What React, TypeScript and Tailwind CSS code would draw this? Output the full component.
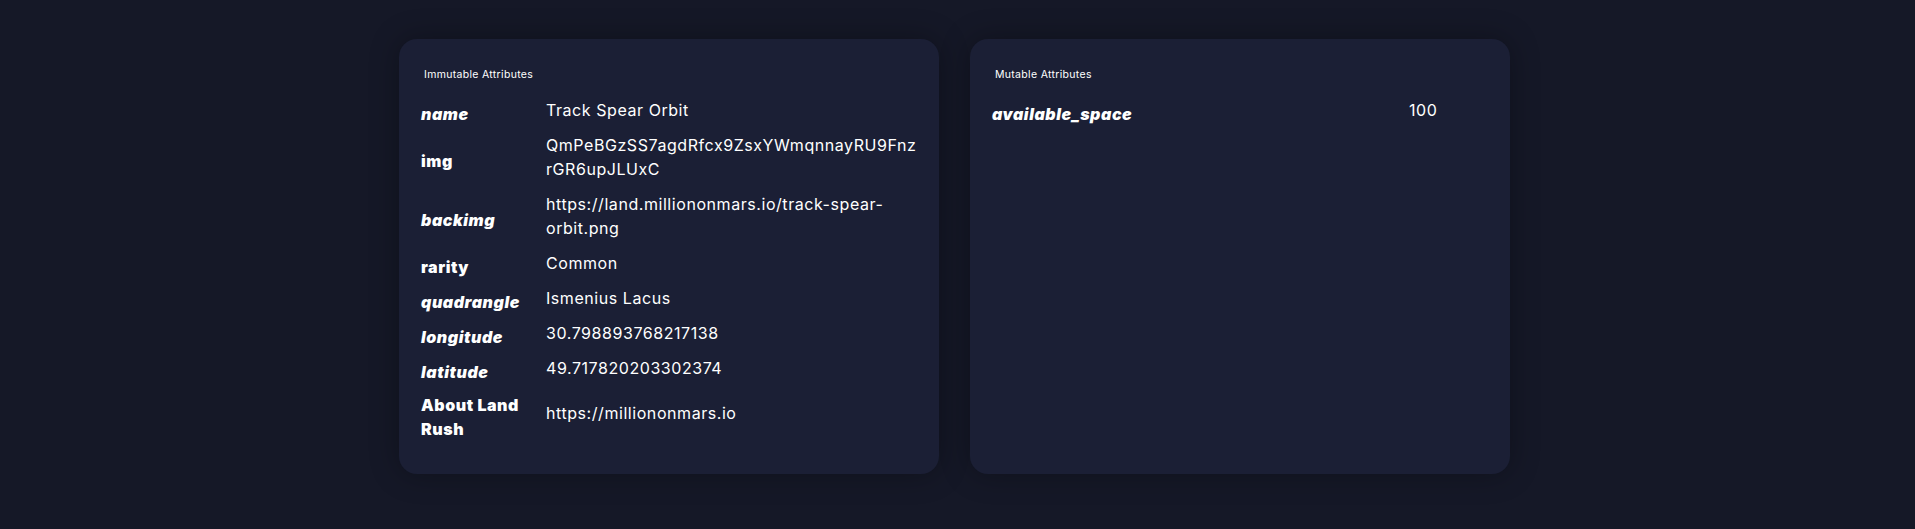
import React from "react";

type Row = { label: string; italic: boolean; value: React.ReactNode };

const immutable: Row[] = [
  { label: "name", italic: true, value: "Track Spear Orbit" },
  {
    label: "img",
    italic: false,
    value: (
      <>
        <span className="block">QmPeBGzSS7agdRfcx9ZsxYWmqnnayRU9Fnz</span>
        <span className="block">rGR6upJLUxC</span>
      </>
    ),
  },
  {
    label: "backimg",
    italic: true,
    value: (
      <>
        <span className="block">https://land.milliononmars.io/track-spear-</span>
        <span className="block">orbit.png</span>
      </>
    ),
  },
  { label: "rarity", italic: false, value: "Common" },
  { label: "quadrangle", italic: true, value: "Ismenius Lacus" },
  { label: "longitude", italic: true, value: "30.798893768217138" },
  { label: "latitude", italic: true, value: "49.717820203302374" },
  { label: "About Land Rush", italic: false, value: "https://milliononmars.io" },
];

const mutable: Row[] = [{ label: "available_space", italic: true, value: "100" }];

function Card({ title, rows, labelW }: { title: string; rows: Row[]; labelW: string }) {
  return (
    <div className="rounded-[18px] bg-[#1b1f35] px-[22px] pt-[29px] pb-[30px] shadow-[0_0_30px_rgba(0,0,0,0.3)]">
      <div className="pl-[3px] text-[10.5px] leading-[14px] tracking-[0.03em] text-white">{title}</div>
      <div className="mt-[14px] flex flex-col">
        {rows.map((r) => (
          <div key={r.label} className="flex items-center py-[1.5px]">
            <div
              className={`${labelW} shrink-0 py-[2px] pr-2 text-[16px] leading-6 font-black tracking-[0.035em] text-white ${
                r.italic ? "italic" : ""
              }`}
            >
              {r.label}
            </div>
            <div className="mb-2 min-w-0 flex-1 text-[16px] leading-6 tracking-[0.035em] text-white">{r.value}</div>
          </div>
        ))}
      </div>
    </div>
  );
}

export default function App() {
  return (
    <div
      className="flex min-h-[529px] w-full justify-center bg-[#151827] pt-[39px] pr-[6px]"
      style={{ fontFamily: "Inter, 'Liberation Sans', sans-serif" }}
    >
      <div className="grid h-[435px] w-[1111px] grid-cols-[540px_540px] gap-x-[31px]">
        <Card title="Immutable Attributes" rows={immutable} labelW="w-[125px]" />
        <Card title="Mutable Attributes" rows={mutable} labelW="w-[417px]" />
      </div>
    </div>
  );
}
